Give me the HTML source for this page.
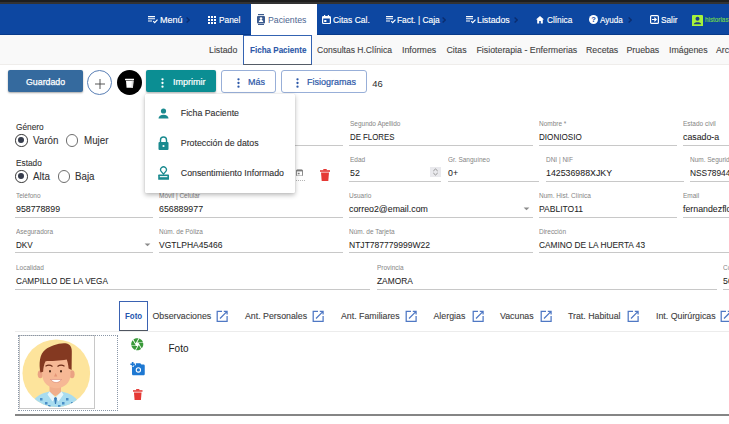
<!DOCTYPE html>
<html><head><meta charset="utf-8">
<style>
*{box-sizing:border-box;margin:0;padding:0}
html,body{width:729px;height:424px;overflow:hidden;background:#fff;font-family:"Liberation Sans",sans-serif;position:relative}
.a{position:absolute}
.t{position:absolute;white-space:nowrap;line-height:1}
#topbar{left:0;top:0;width:729px;height:4px;background:linear-gradient(#1e1e1e 0,#1e1e1e 2px,#333 2px)}
#nav{left:0;top:4px;width:729px;height:31px;background:#0d47a1;border-bottom:1px solid #073a8a}
.nv{color:#fff;font-size:9.3px;top:15.9px;-webkit-text-stroke:0.15px currentColor;transform-origin:0 0}
.chev{color:#2a4f92;font-size:8px;top:16px}
#ptab{left:251px;top:4px;width:66px;height:31px;background:#fff}
#subnav{left:0;top:35px;width:729px;height:30px;background:#f9f9f9;border-bottom:1px solid #efedeb}
.sn{color:#444;font-size:8.8px;top:45.5px;-webkit-text-stroke:0.1px currentColor}
#fbox{left:243px;top:35px;width:69px;height:30px;background:#fff;border:1px solid #3463b2;border-bottom:1.5px solid #555c66}
.lbl{color:#858585;font-size:7.5px;margin-top:-0.55px;transform-origin:0 0;transform:scaleX(0.864)}
.val{color:#1e1e1e;font-size:9.6px;-webkit-text-stroke:0.06px #1e1e1e;margin-top:-0.64px;transform-origin:0 0;transform:scaleX(0.917)}
.ul{position:absolute;height:1px;background:#c8c8c8}
.radio{position:absolute;width:12.3px;height:12.3px;border-radius:50%;border:1.5px solid #6e6e6e;margin-top:-0.3px}.radio.on{border-color:#3c3c3c}
.radio.on::after{content:"";position:absolute;left:1.75px;top:1.75px;width:5.8px;height:5.8px;border-radius:50%;background:#363c4c}
.tab{color:#404040;font-size:8.8px;top:312px;-webkit-text-stroke:0.1px #404040}
.ext{position:absolute;top:310px;width:12px;height:12px;margin-left:-0.5px}
</style></head><body>
<div class="a" id="topbar"></div>
<div class="a" id="nav"></div>
<div class="a" id="ptab"></div>

<!-- nav items -->
<svg class="a" style="left:147.8px;top:16px" width="10" height="8" viewBox="0 0 10 8"><path d="M0 0.6h7M0 2.8h7M0 5h4" stroke="#fff" stroke-width="1.1"/><path d="M5.2 5.2l1.5 1.5 2.8-3" stroke="#fff" stroke-width="1.2" fill="none"/></svg>
<div class="t nv" style="left:159.5px;transform:scaleX(0.974)">Menú</div>
<svg class="a" style="left:186px;top:17px" width="4" height="6" viewBox="0 0 4 6"><path d="M0.6 0.5L3.2 3 0.6 5.5" stroke="#0b2d6f" stroke-width="1.4" fill="none"/></svg>
<svg class="a" style="left:208px;top:16px" width="8" height="8" viewBox="0 0 8 8" fill="#fff"><rect x="0" y="0" width="2" height="2"/><rect x="3" y="0" width="2" height="2"/><rect x="6" y="0" width="2" height="2"/><rect x="0" y="3" width="2" height="2"/><rect x="3" y="3" width="2" height="2"/><rect x="6" y="3" width="2" height="2"/><rect x="0" y="6" width="2" height="2"/><rect x="3" y="6" width="2" height="2"/><rect x="6" y="6" width="2" height="2"/></svg>
<div class="t nv" style="left:219.2px;transform:scaleX(0.896)">Panel</div>
<svg class="a" style="left:256.5px;top:14px" width="8" height="11" viewBox="0 0 8 11"><rect x="1" y="0" width="6" height="1.2" fill="#3b5a8e"/><rect x="0" y="2" width="8" height="7.5" rx="1" fill="#3b5a8e"/><circle cx="4" cy="4.6" r="1.3" fill="#fff"/><path d="M1.8 8c0-1.4 1-2 2.2-2s2.2.6 2.2 2z" fill="#fff"/><rect x="1" y="10" width="6" height="1" fill="#3b5a8e"/></svg>
<div class="t nv" style="left:268.1px;color:#4b6490;-webkit-text-stroke:0;transform:scaleX(0.940)">Pacientes</div>
<svg class="a" style="left:322px;top:15px" width="9" height="9" viewBox="0 0 9 9"><rect x="0.6" y="1.5" width="7.8" height="7" rx="1" fill="none" stroke="#fff" stroke-width="1.2"/><rect x="0.6" y="1.5" width="7.8" height="2" fill="#fff"/><rect x="2" y="0" width="1.2" height="2" fill="#fff"/><rect x="5.8" y="0" width="1.2" height="2" fill="#fff"/><rect x="2.2" y="5" width="2.2" height="2" fill="#fff"/></svg>
<div class="t nv" style="left:333.2px;transform:scaleX(0.912)">Citas Cal.</div>
<svg class="a" style="left:385.8px;top:16px" width="10" height="8" viewBox="0 0 10 8"><path d="M0 0.6h7M0 2.8h7M0 5h4" stroke="#fff" stroke-width="1.1"/><path d="M5.2 5.2l1.5 1.5 2.8-3" stroke="#fff" stroke-width="1.2" fill="none"/></svg>
<div class="t nv" style="left:397.4px;transform:scaleX(0.902)">Fact. | Caja</div>
<svg class="a" style="left:442.2px;top:17px" width="4" height="6" viewBox="0 0 4 6"><path d="M0.6 0.5L3.2 3 0.6 5.5" stroke="#0b2d6f" stroke-width="1.4" fill="none"/></svg>
<svg class="a" style="left:465.8px;top:16px" width="10" height="8" viewBox="0 0 10 8"><path d="M0 0.6h7M0 2.8h7M0 5h4" stroke="#fff" stroke-width="1.1"/><path d="M5.2 5.2l1.5 1.5 2.8-3" stroke="#fff" stroke-width="1.2" fill="none"/></svg>
<div class="t nv" style="left:476.7px;transform:scaleX(0.943)">Listados</div>
<svg class="a" style="left:513.6px;top:17px" width="4" height="6" viewBox="0 0 4 6"><path d="M0.6 0.5L3.2 3 0.6 5.5" stroke="#0b2d6f" stroke-width="1.4" fill="none"/></svg>
<svg class="a" style="left:535.5px;top:15.5px" width="8" height="8" viewBox="0 0 8 8"><path d="M4 0L0 3.6h1.2V7.5h2V5h1.6v2.5h2V3.6H8z" fill="#fff"/></svg>
<div class="t nv" style="left:546.9px;transform:scaleX(0.890)">Clínica</div>
<svg class="a" style="left:588.5px;top:15px" width="9" height="9" viewBox="0 0 9 9"><circle cx="4.5" cy="4.5" r="4.5" fill="#fff"/><text x="4.5" y="7.4" font-size="7.5" font-weight="bold" text-anchor="middle" fill="#0d47a1" font-family="Liberation Sans">?</text></svg>
<div class="t nv" style="left:600.0px;transform:scaleX(0.870)">Ayuda</div>
<svg class="a" style="left:628.4px;top:17px" width="4" height="6" viewBox="0 0 4 6"><path d="M0.6 0.5L3.2 3 0.6 5.5" stroke="#0b2d6f" stroke-width="1.4" fill="none"/></svg>
<svg class="a" style="left:650px;top:15px" width="9" height="9" viewBox="0 0 9 9"><rect x="0.6" y="0.6" width="7.8" height="7.8" rx="1" fill="none" stroke="#fff" stroke-width="1.2"/><path d="M2 4.5h4M4.3 2.6l1.9 1.9-1.9 1.9" stroke="#fff" stroke-width="1.2" fill="none"/></svg>
<div class="t nv" style="left:661.4px;transform:scaleX(0.884)">Salir</div>
<svg class="a" style="left:692px;top:14.5px" width="11" height="11.5" viewBox="0 0 11 11.5"><rect width="11" height="11.5" rx="1" fill="#a6f23a"/><circle cx="5.5" cy="3.8" r="2" fill="#1d3f86"/><path d="M1.8 9.2c0.3-1.3 1.8-1.9 3.7-1.9s3.4.6 3.7 1.9z" fill="#1d3f86"/></svg>
<div class="t" style="left:705px;top:16.2px;font-size:7.2px;color:#72d84a;-webkit-text-stroke:0.15px #72d84a;transform:scaleX(0.88);transform-origin:0 0">historias:clinicas</div>

<!-- subnav -->
<div class="a" id="subnav"></div>
<div class="a" id="fbox"></div>
<div class="t sn" style="left:209px">Listado</div>
<div class="t sn" style="left:249.5px;color:#2d58a8;font-weight:bold;font-size:8.8px;top:45.5px;transform:scaleX(0.915);transform-origin:0 0">Ficha Paciente</div>
<div class="t sn" style="left:316.5px;transform:scaleX(0.97);transform-origin:0 0">Consultas H.Clínica</div>
<div class="t sn" style="left:402px">Informes</div>
<div class="t sn" style="left:446.5px">Citas</div>
<div class="t sn" style="left:476.5px">Fisioterapia - Enfermerias</div>
<div class="t sn" style="left:586px">Recetas</div>
<div class="t sn" style="left:626.5px">Pruebas</div>
<div class="t sn" style="left:669px">Imágenes</div>
<div class="t sn" style="left:716px">Archivos</div>

<!-- buttons -->
<div class="a" style="left:8px;top:70px;width:74.5px;height:22px;background:#356a9e;border-radius:2px;box-shadow:0 1px 2px rgba(0,0,0,.35)"></div>
<div class="t" style="left:26px;top:77.8px;font-size:8.8px;color:#fff;-webkit-text-stroke:0.25px #fff">Guardado</div>
<div class="a" style="left:87px;top:70px;width:25px;height:25px;border-radius:50%;border:1px solid #5a7fb5;background:#fff"></div>
<svg class="a" style="left:93.5px;top:77.5px" width="12" height="12" viewBox="0 0 12 12"><path d="M6 1v10M1 6h10" stroke="#444" stroke-width="0.9"/></svg>
<div class="a" style="left:116.5px;top:70px;width:25px;height:25px;border-radius:50%;background:#000"></div>
<svg class="a" style="left:124.5px;top:77.5px" width="9.5" height="10" viewBox="0 0 9.5 10"><rect x="0" y="0.8" width="9.5" height="1.5" rx="0.5" fill="#fff"/><path d="M1 2.8h7.5l-.6 7H1.6z" fill="#fff"/><path d="M6.8 2.8h1.7l-.6 7H6.3z" fill="#ddd"/></svg>
<div class="a" style="left:145.5px;top:70px;width:70.5px;height:22px;background:#0b8e93;border-radius:2px;box-shadow:0 1px 2px rgba(0,0,0,.3)"></div>
<svg class="a" style="left:161.3px;top:77.8px" width="3" height="10" viewBox="0 0 3 10" fill="#fff"><circle cx="1.5" cy="1.3" r="1.15"/><circle cx="1.5" cy="5" r="1.15"/><circle cx="1.5" cy="8.7" r="1.15"/></svg>
<div class="t" style="left:173px;top:77.5px;font-size:9px;color:#fff;-webkit-text-stroke:0.2px #fff">Imprimir</div>
<div class="a" style="left:220.5px;top:70.2px;width:55px;height:22.8px;background:#fff;border:1px solid #98afd8;border-radius:3px"></div>
<svg class="a" style="left:237.3px;top:77.8px" width="3" height="10" viewBox="0 0 3 10" fill="#2d58a8"><circle cx="1.5" cy="1.3" r="1.15"/><circle cx="1.5" cy="5" r="1.15"/><circle cx="1.5" cy="8.7" r="1.15"/></svg>
<div class="t" style="left:248px;top:77.5px;font-size:9px;color:#2d58a8;-webkit-text-stroke:0.2px #2d58a8">Más</div>
<div class="a" style="left:280.5px;top:70.2px;width:86px;height:23.2px;background:#fff;border:1px solid #98afd8;border-radius:3px"></div>
<svg class="a" style="left:296.3px;top:77.8px" width="3" height="10" viewBox="0 0 3 10" fill="#2d58a8"><circle cx="1.5" cy="1.3" r="1.15"/><circle cx="1.5" cy="5" r="1.15"/><circle cx="1.5" cy="8.7" r="1.15"/></svg>
<div class="t" style="left:307px;top:77.5px;font-size:9px;color:#2d58a8;-webkit-text-stroke:0.2px #2d58a8">Fisiogramas</div>
<div class="t" style="left:372.3px;top:79.3px;font-size:9.4px;color:#2a2a2a">46</div>

<!-- FORM -->
<!-- row1 -->
<div class="t" style="left:15.5px;top:123.2px;font-size:9.2px;color:#333;transform:scaleX(0.9);transform-origin:0 0;-webkit-text-stroke:0.1px #333">Género</div>
<div class="radio on" style="left:15.3px;top:134.5px"></div>
<div class="t" style="left:33px;top:135.1px;font-size:10.5px;color:#333;transform:scaleX(0.93);transform-origin:0 0;-webkit-text-stroke:0.1px #333">Varón</div>
<div class="radio" style="left:65.8px;top:134.5px"></div>
<div class="t" style="left:83.5px;top:135.1px;font-size:10.5px;color:#333;transform:scaleX(0.93);transform-origin:0 0;-webkit-text-stroke:0.1px #333">Mujer</div>
<div class="ul" style="left:159px;top:144.5px;width:184px"></div>
<div class="t lbl" style="left:349.5px;top:120.7px">Segundo Apellido</div>
<div class="t val" style="left:349.5px;top:132.5px;transform:scaleX(0.816)">DE FLORES</div>
<div class="ul" style="left:349px;top:144.5px;width:184px"></div>
<div class="t lbl" style="left:539px;top:120.7px">Nombre *</div>
<div class="t val" style="left:539px;top:132.5px;transform:scaleX(0.843)">DIONIOSIO</div>
<div class="ul" style="left:539px;top:144.5px;width:138px"></div>
<div class="t lbl" style="left:683px;top:120.7px">Estado civil</div>
<div class="t val" style="left:683px;top:132.5px">casado-a</div>
<div class="ul" style="left:683px;top:144.5px;width:50px"></div>

<!-- row2 -->
<div class="t" style="left:15.5px;top:159.2px;font-size:9.2px;color:#333;transform:scaleX(0.9);transform-origin:0 0;-webkit-text-stroke:0.1px #333">Estado</div>
<div class="radio on" style="left:15.3px;top:170.5px"></div>
<div class="t" style="left:33px;top:171.1px;font-size:10.5px;color:#333;transform:scaleX(0.93);transform-origin:0 0;-webkit-text-stroke:0.1px #333">Alta</div>
<div class="radio" style="left:57.8px;top:170.5px"></div>
<div class="t" style="left:75px;top:171.1px;font-size:10.5px;color:#333;transform:scaleX(0.93);transform-origin:0 0;-webkit-text-stroke:0.1px #333">Baja</div>
<svg class="a" style="left:296.3px;top:168.8px" width="7" height="7.5" viewBox="0 0 7 7.5"><rect x="0.45" y="0.9" width="6.1" height="6.1" rx="0.8" fill="none" stroke="#7a7a7a" stroke-width="0.9"/><rect x="0.45" y="0.9" width="6.1" height="1.5" fill="#7a7a7a"/><rect x="1.8" y="3.8" width="1.8" height="1.5" fill="#7a7a7a"/></svg>
<div class="a" style="left:279px;top:180.3px;width:26px;height:0;border-top:1px dotted #b5b5b5"></div>
<svg class="a" style="left:319.5px;top:168.5px" width="10" height="12" viewBox="0 0 10 12"><rect x="0" y="1.2" width="10" height="1.6" fill="#e53935"/><rect x="3.3" y="0" width="3.4" height="1.5" fill="#e53935"/><path d="M1 3.5h8l-.7 8.5H1.7z" fill="#e53935"/></svg>
<div class="t lbl" style="left:349.5px;top:156.5px">Edad</div>
<div class="t val" style="left:349.5px;top:168.5px">52</div>
<svg class="a" style="left:430px;top:166.8px" width="11" height="10" viewBox="0 0 11 10"><rect width="11" height="10" fill="#e9e9ed"/><path d="M3.3 4l2.2-2 2.2 2M3.3 6l2.2 2 2.2-2" stroke="#8a8a8a" stroke-width="0.9" fill="none"/></svg>
<div class="ul" style="left:349px;top:180.5px;width:92px"></div>
<div class="t lbl" style="left:447.5px;top:156.5px">Gr. Sanguíneo</div>
<div class="t val" style="left:447.5px;top:168.5px">0+</div>
<div class="ul" style="left:447.5px;top:180.5px;width:91.5px"></div>
<div class="t lbl" style="left:545.5px;top:156.5px">DNI | NIF</div>
<div class="t val" style="left:545.5px;top:168.5px">142536988XJKY</div>
<div class="ul" style="left:545.5px;top:180.5px;width:138px"></div>
<div class="t lbl" style="left:689.5px;top:156.5px">Num. Seguridad Social</div>
<div class="t val" style="left:689.5px;top:168.5px;transform:scaleX(0.871)">NSS7894455</div>
<div class="ul" style="left:689.5px;top:180.5px;width:50px"></div>

<!-- row3 -->
<div class="t lbl" style="left:15.5px;top:192.4px">Teléfono</div>
<div class="t val" style="left:15.5px;top:205px">958778899</div>
<div class="ul" style="left:15px;top:217px;width:137.5px"></div>
<div class="t lbl" style="left:159px;top:192.4px">Móvil | Celular</div>
<div class="t val" style="left:159px;top:205px">656889977</div>
<div class="ul" style="left:159px;top:217px;width:184px"></div>
<div class="t lbl" style="left:349px;top:192.4px">Usuario</div>
<div class="t val" style="left:349px;top:205px">correo2@email.com</div>
<svg class="a" style="left:523.3px;top:206.5px" width="7" height="4" viewBox="0 0 7 4"><path d="M0.6 0.4h5.8L3.5 3.3z" fill="#8c8c8c"/></svg>
<div class="ul" style="left:349px;top:217px;width:184px"></div>
<div class="t lbl" style="left:539px;top:192.4px">Num. Hist. Clínica</div>
<div class="t val" style="left:539px;top:205px;transform:scaleX(0.889)">PABLITO11</div>
<div class="ul" style="left:539px;top:217px;width:138px"></div>
<div class="t lbl" style="left:683px;top:192.4px">Email</div>
<div class="t val" style="left:683px;top:205px">fernandezflores@email.com</div>
<div class="ul" style="left:683px;top:217px;width:50px"></div>

<!-- row4 -->
<div class="t lbl" style="left:15.5px;top:228.4px">Aseguradora</div>
<div class="t val" style="left:15.5px;top:240.5px;transform:scaleX(0.843)">DKV</div>
<svg class="a" style="left:143.8px;top:242.5px" width="7" height="4" viewBox="0 0 7 4"><path d="M0.6 0.4h5.8L3.5 3.3z" fill="#8c8c8c"/></svg>
<div class="ul" style="left:15px;top:252px;width:137.5px"></div>
<div class="t lbl" style="left:159px;top:228.4px">Núm. de Póliza</div>
<div class="t val" style="left:159px;top:240.5px;transform:scaleX(0.889)">VGTLPHA45466</div>
<div class="ul" style="left:159px;top:252px;width:184px"></div>
<div class="t lbl" style="left:349px;top:228.4px">Núm. de Tarjeta</div>
<div class="t val" style="left:349px;top:240.5px;transform:scaleX(0.889)">NTJT787779999W22</div>
<div class="ul" style="left:349px;top:252px;width:184px"></div>
<div class="t lbl" style="left:539px;top:228.4px">Dirección</div>
<div class="t val" style="left:539px;top:240.5px;transform:scaleX(0.867)">CAMINO DE LA HUERTA 43</div>
<div class="ul" style="left:539px;top:252px;width:190px"></div>

<!-- row5 -->
<div class="t lbl" style="left:15.5px;top:264.4px">Localidad</div>
<div class="t val" style="left:15.5px;top:277px;transform:scaleX(0.853)">CAMPILLO DE LA VEGA</div>
<div class="ul" style="left:15px;top:289px;width:355px"></div>
<div class="t lbl" style="left:376.5px;top:264.4px">Provincia</div>
<div class="t val" style="left:376.5px;top:277px;transform:scaleX(0.871)">ZAMORA</div>
<div class="ul" style="left:376.5px;top:289px;width:340px"></div>
<div class="t lbl" style="left:722.5px;top:264.4px">Código</div>
<div class="t val" style="left:722.5px;top:276.2px">50</div>
<div class="ul" style="left:722.5px;top:289px;width:10px"></div>

<!-- dropdown -->
<div class="a" style="left:145.3px;top:93.8px;width:149.7px;height:98.8px;background:#fff;border-radius:1px;box-shadow:0 2px 5px rgba(0,0,0,.28),0 0 1px rgba(0,0,0,.2)"></div>
<svg class="a" style="left:158px;top:107.5px" width="11" height="11" viewBox="0 0 11 11" fill="#1a8a8f"><circle cx="5.5" cy="3" r="2.6"/><path d="M0.5 10.5c0-2.5 2.2-3.8 5-3.8s5 1.3 5 3.8z"/></svg>
<div class="t" style="left:180.8px;top:108.5px;font-size:8.8px;color:#303030;-webkit-text-stroke:0.1px #303030">Ficha Paciente</div>
<svg class="a" style="left:158px;top:136px" width="11" height="14" viewBox="0 0 11 14" fill="#1a8a8f"><path d="M2.5 6V4a3 3 0 0 1 6 0v2" stroke="#1a8a8f" stroke-width="1.4" fill="none"/><rect x="0.5" y="6" width="10" height="8" rx="1"/><circle cx="5.5" cy="10" r="1.1" fill="#fff"/></svg>
<div class="t" style="left:180.8px;top:138.5px;font-size:8.8px;color:#303030;-webkit-text-stroke:0.1px #303030">Protección de datos</div>
<svg class="a" style="left:158px;top:166px" width="11" height="14" viewBox="0 0 11 14"><path d="M5.5 8.2L3 5.2A2.9 2.9 0 1 1 8 5.2z" fill="none" stroke="#1a8a8f" stroke-width="1.3" stroke-linejoin="round"/><rect x="0.2" y="8.6" width="10.8" height="5.2" rx="0.6" fill="#1a8a8f"/><rect x="1.8" y="10.1" width="7.6" height="1.1" fill="#fff"/></svg>
<div class="t" style="left:180.8px;top:168.5px;font-size:8.8px;color:#303030;-webkit-text-stroke:0.1px #303030">Consentimiento Informado</div>

<!-- tabs -->
<div class="a" style="left:15px;top:331px;width:714px;height:1px;background:#ececec"></div>
<div class="a" style="left:118.5px;top:300.6px;width:29px;height:30.2px;border:1.25px solid #3a62b2;border-bottom:1.5px solid #4f5560;background:#fff"></div>
<div class="t" style="left:125px;top:311.8px;font-size:8.8px;color:#2455ae;font-weight:bold;transform:scaleX(0.9);transform-origin:0 0">Foto</div>
<div class="t tab" style="left:152.5px">Observaciones</div>
<svg class="ext" style="left:216.5px" viewBox="0 0 12 12"><path d="M6 1.4H1.2v10h9.9V6" fill="none" stroke="#4f78c4" stroke-width="1.25"/><path d="M7.8 1.4h3.3v3.1M11.1 1.4L4 8.5" fill="none" stroke="#4f78c4" stroke-width="1.25"/></svg>
<div class="t tab" style="left:245px">Ant. Personales</div>
<svg class="ext" style="left:312px" viewBox="0 0 12 12"><path d="M6 1.4H1.2v10h9.9V6" fill="none" stroke="#4f78c4" stroke-width="1.25"/><path d="M7.8 1.4h3.3v3.1M11.1 1.4L4 8.5" fill="none" stroke="#4f78c4" stroke-width="1.25"/></svg>
<div class="t tab" style="left:341px">Ant. Familiares</div>
<svg class="ext" style="left:405px" viewBox="0 0 12 12"><path d="M6 1.4H1.2v10h9.9V6" fill="none" stroke="#4f78c4" stroke-width="1.25"/><path d="M7.8 1.4h3.3v3.1M11.1 1.4L4 8.5" fill="none" stroke="#4f78c4" stroke-width="1.25"/></svg>
<div class="t tab" style="left:433.5px">Alergias</div>
<svg class="ext" style="left:472px" viewBox="0 0 12 12"><path d="M6 1.4H1.2v10h9.9V6" fill="none" stroke="#4f78c4" stroke-width="1.25"/><path d="M7.8 1.4h3.3v3.1M11.1 1.4L4 8.5" fill="none" stroke="#4f78c4" stroke-width="1.25"/></svg>
<div class="t tab" style="left:500px">Vacunas</div>
<svg class="ext" style="left:540px" viewBox="0 0 12 12"><path d="M6 1.4H1.2v10h9.9V6" fill="none" stroke="#4f78c4" stroke-width="1.25"/><path d="M7.8 1.4h3.3v3.1M11.1 1.4L4 8.5" fill="none" stroke="#4f78c4" stroke-width="1.25"/></svg>
<div class="t tab" style="left:568px">Trat. Habitual</div>
<svg class="ext" style="left:627px" viewBox="0 0 12 12"><path d="M6 1.4H1.2v10h9.9V6" fill="none" stroke="#4f78c4" stroke-width="1.25"/><path d="M7.8 1.4h3.3v3.1M11.1 1.4L4 8.5" fill="none" stroke="#4f78c4" stroke-width="1.25"/></svg>
<div class="t tab" style="left:656px">Int. Quirúrgicas</div>
<svg class="ext" style="left:720px" viewBox="0 0 12 12"><path d="M6 1.4H1.2v10h9.9V6" fill="none" stroke="#4f78c4" stroke-width="1.25"/><path d="M7.8 1.4h3.3v3.1M11.1 1.4L4 8.5" fill="none" stroke="#4f78c4" stroke-width="1.25"/></svg>

<!-- photo -->
<div class="a" style="left:18.5px;top:335px;width:76px;height:74px;border:1px solid #c8c8c8;background:#fff"></div>
<svg class="a" style="left:19.5px;top:336px" width="74" height="72" viewBox="0 0 74 72">
<defs><clipPath id="cc"><circle cx="36.3" cy="37.2" r="33.8"/></clipPath></defs>
<circle cx="36.3" cy="37.2" r="33.8" fill="#fde49c"/>
<g clip-path="url(#cc)">
<path d="M29.5 48h11.5v9l-5.7 3-5.8-3z" fill="#f0ae8c"/>
<path d="M10 74c1-9 6-14 14-17l5.5-1.5 6 6 6-6 5.5 1.5c8 3 13 8 14 17z" fill="#a8dcef"/>
<path d="M29.5 55.5l6 6-3 4-5-7zM41.5 55.5l-6 6 3 4 5-7z" fill="#e8f6fb"/>
<path d="M34 62l1.5-1 1.5 1-1 6h-1z" fill="#3a7db8"/>
<g fill="#4a8fc8"><rect x="20" y="62" width="2.5" height="2.5"/><rect x="25" y="66" width="2.5" height="2.5"/><rect x="17" y="67" width="2.5" height="2.5"/><rect x="46" y="62" width="2.5" height="2.5"/><rect x="42" y="66" width="2.5" height="2.5"/><rect x="51" y="66" width="2.5" height="2.5"/><rect x="28" y="69" width="2.5" height="2.5"/><rect x="38" y="69" width="2.5" height="2.5"/></g>
</g>
<ellipse cx="20.3" cy="38.3" rx="2.6" ry="4" fill="#eaa283"/>
<ellipse cx="52" cy="38.3" rx="2.6" ry="4" fill="#eaa283"/>
<path d="M22.3 24C22.3 21.5 50.5 21.5 50.5 24L50.5 38.5C50.5 47 44 52.2 36.4 52.2C28.8 52.2 22.3 47 22.3 38.5Z" fill="#f6b895"/>
<path d="M20.4 36.5C18.8 28 19.3 18 25.5 13.4C30 10 40 6.2 46.7 7.4C50.6 8.2 52.2 12 51.8 17L51.6 34L48.6 32.5C48.2 28.5 47.6 25.5 46.7 23.6C40 25 31 25 25.6 25.2C24 28 23.3 32 23.1 35.8Z" fill="#843921"/>
<path d="M25.5 30.2c2-1.2 5-1.2 7 .3M37.5 30.5c2-1.5 5-1.5 7-.3" stroke="#6b2c18" stroke-width="1.1" fill="none"/>
<ellipse cx="30" cy="35.2" rx="1" ry="1.3" fill="#4a2a1a"/><ellipse cx="41" cy="35.2" rx="1" ry="1.3" fill="#4a2a1a"/>
<path d="M35.7 37l-1.6 3.4h3.2z" fill="#e39476"/>
<path d="M30.5 43.5c3.5 4 8 4 11 0z" fill="#fff" stroke="#d0705f" stroke-width="0.5"/>
</svg>

<div class="a" style="left:18px;top:334.5px;width:100px;height:76px;border:1px dotted #8a97a8"></div>
<svg class="a" style="left:130.2px;top:337px" width="14.5" height="14.5" viewBox="0 0 24 24" fill="#3a9a3a"><path d="M9.4 10.5l4.77-8.26C13.47 2.09 12.75 2 12 2c-2.4 0-4.6.85-6.32 2.25l3.66 6.35.06-.1zM21.54 9c-.92-2.92-3.15-5.26-6-6.34L11.88 9h9.66zm.26 1h-7.49l.29.5 4.76 8.25C21 16.97 22 14.61 22 12c0-.69-.07-1.35-.2-2zM8.54 12l-3.9-6.75C3.01 7.03 2 9.39 2 12c0 .69.07 1.35.2 2h7.49l-1.15-2zm-6.08 3c.92 2.92 3.15 5.26 6 6.34L12.12 15H2.46zm11.27 0l-3.9 6.76c.7.15 1.42.24 2.17.24 2.4 0 4.6-.85 6.32-2.25l-3.66-6.35-.93 1.6z"/></svg>
<svg class="a" style="left:129.5px;top:362px" width="15.5" height="14" viewBox="0 0 24 22" fill="#1e78d2"><path d="M2.7 2.3V0h2.6v2.3h2.3v2.6H5.3v2.3H2.7V4.9H0.4V2.3z"/><path d="M6 8V5h3V2h7l1.8 2H21c1.1 0 2 .9 2 2v13c0 1.1-.9 2-2 2H5c-1.1 0-2-.9-2-2V8z"/><circle cx="13" cy="12.5" r="4.2" fill="#fff"/><circle cx="13" cy="12.5" r="2.6" fill="#1e78d2"/></svg>
<svg class="a" style="left:133px;top:388.5px" width="9.5" height="11.5" viewBox="0 0 10 12"><rect x="0" y="1.2" width="10" height="1.6" fill="#e53935"/><rect x="3.3" y="0" width="3.4" height="1.5" fill="#e53935"/><path d="M1 3.5h8l-.7 8.5H1.7z" fill="#e53935"/></svg>
<div class="t" style="left:168.5px;top:343.5px;font-size:10px;color:#222">Foto</div>
<div class="a" style="left:15px;top:414.3px;width:714px;height:1.5px;background:#858585"></div>
</body></html>
